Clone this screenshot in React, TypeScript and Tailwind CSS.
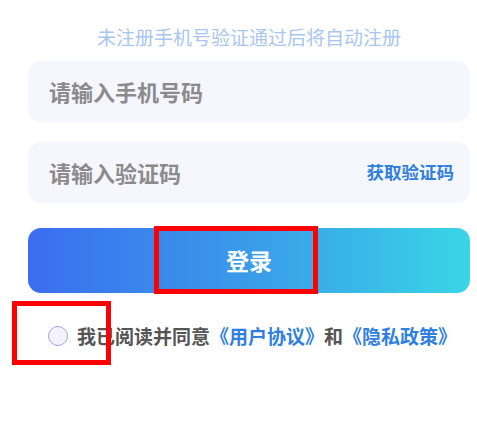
import { useState } from "react";

const font = "font-['Noto_Sans_CJK_SC','Noto_Sans',sans-serif]";

const LoginForm = () => {
  const [phone, setPhone] = useState("");
  const [code, setCode] = useState("");
  const [agreed, setAgreed] = useState(false);

  return (
    <div className={`relative h-[446px] w-[477px] bg-white ${font}`}>
      <div className="flex flex-col pl-[28px] pr-[7px] pt-[24px]">
        <p className="text-center text-[19px] leading-[26px] text-[#a9c6f0]">
          未注册手机号验证通过后将自动注册
        </p>

        <div className="mt-[11px] flex h-[61px] items-center rounded-[14px] bg-[#f6f6fe] px-[21px]">
          <input
            value={phone}
            onChange={(e) => setPhone(e.target.value)}
            placeholder="请输入手机号码"
            className="w-full bg-transparent text-[22px] font-bold text-[#333] outline-none placeholder:text-[#8b8b8b]"
          />
        </div>

        <div className="mt-[20px] flex h-[61px] items-center rounded-[14px] bg-[#f6f6fe] pl-[21px] pr-[16px]">
          <input
            value={code}
            onChange={(e) => setCode(e.target.value)}
            placeholder="请输入验证码"
            className="min-w-0 flex-1 bg-transparent text-[22px] font-bold text-[#333] outline-none placeholder:text-[#8b8b8b]"
          />
          <button className="shrink-0 text-[17.5px] font-bold text-[#2f7fdc]">获取验证码</button>
        </div>

        <button className="mt-[25px] flex h-[65px] items-center justify-center rounded-[13px] bg-gradient-to-r from-[#3b6cf0] via-[#3a9be8] to-[#39d6e6] text-[23px] font-bold text-white">
          登录
        </button>

        <div className="mt-[30px] flex h-[26px] items-center pl-[20px]">
          <button
            onClick={() => setAgreed(!agreed)}
            className="flex h-[20px] w-[20px] shrink-0 items-center justify-center rounded-full border-[1.5px] border-[#9fa6e0] bg-[#f2f3fd]"
          >
            {agreed && <span className="h-[10px] w-[10px] rounded-full bg-[#3a7fe8]" />}
          </button>
          <p className="ml-[9px] text-[19px] font-bold leading-[26px] text-[#555] whitespace-nowrap">
            我已阅读并同意<span className="text-[#2f80e0]">《用户协议》</span>和
            <span className="text-[#2f80e0]">《隐私政策》</span>
          </p>
        </div>
      </div>

      {/* annotation boxes */}
      <div className="pointer-events-none absolute left-[154px] top-[226px] h-[68px] w-[164px] border-[5px] border-[#ff0000]" />
      <div className="pointer-events-none absolute left-[12px] top-[301px] h-[64px] w-[99px] border-[5px] border-[#ff0000]" />
    </div>
  );
};

export default function App() {
  return <LoginForm />;
}
